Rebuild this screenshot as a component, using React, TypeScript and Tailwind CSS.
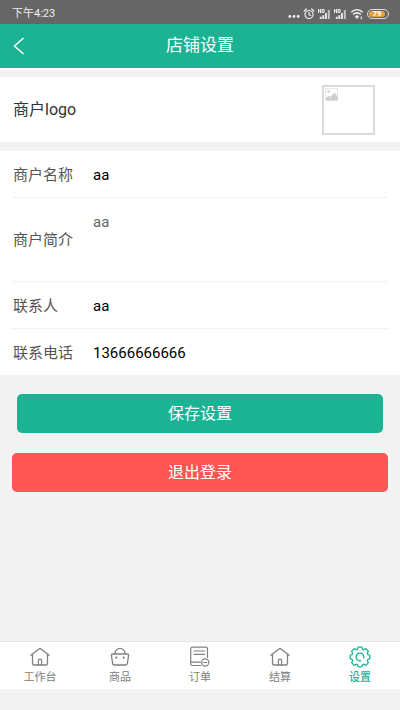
import { useState, type ReactNode } from 'react'
import clsx from 'clsx'

function StatusIcons() {
  return (
    <div className="flex items-center gap-[3px] text-[#eeeeee]">
      <svg width="12" height="12" viewBox="0 0 12 12" fill="currentColor">
        <circle cx="1.8" cy="8.5" r="1.4" />
        <circle cx="6" cy="8.5" r="1.4" />
        <circle cx="10.2" cy="8.5" r="1.4" />
      </svg>
      <svg width="12" height="12" viewBox="0 0 11 12" fill="none" stroke="currentColor" strokeWidth="1.2">
        <circle cx="5.5" cy="6.5" r="4" />
        <path d="M5.5 4.3v2.4l1.7.8M.7 3 2.8 1M10.3 3 8.2 1" strokeLinecap="round" />
      </svg>
      <SignalIcon />
      <SignalIcon />
      <svg width="14" height="12" viewBox="0 0 13 12" fill="none" stroke="currentColor" strokeWidth="1.6">
        <path d="M.8 4.2a8 8 0 0 1 11.4 0M2.7 6.5a5.3 5.3 0 0 1 7.6 0" />
        <path d="M4.3 8.5a3 3 0 0 1 4.4 0L6.5 11z" fill="currentColor" stroke="none" />
        <path d="M10.8 8.6v2.6" strokeWidth="1.2" />
      </svg>
      <div className="flex h-[10px] w-[22px] items-center rounded-full border border-[#dddddd] p-px">
        <span className="flex h-full w-4 items-center justify-center rounded-full bg-[#e8a33a] text-[8px] leading-none font-bold text-white">
          79
        </span>
      </div>
    </div>
  )
}

function SignalIcon() {
  return (
    <svg width="13" height="12" viewBox="0 0 13 12" fill="currentColor">
      <path d="M0 1h1v1.2h1V1h1v4H2V3.3H1V5H0zM3.6 1h1.6c1 0 1.6.8 1.6 2s-.6 2-1.6 2H3.6zm1 1v2c.8 0 1.1-.3 1.1-1s-.3-1-1.1-1z" />
      <path d="M1.8 8.7h1.8V11H1.8zM4.4 7.2h1.8V11H4.4zM7 5h1.8v6H7z" />
      <path d="M9.8 2h2v9h-2z" opacity=".7" />
    </svg>
  )
}

function HomeIcon() {
  return (
    <svg width="22" height="22" viewBox="0 0 22 22" fill="none" stroke="currentColor" strokeWidth="1.3" strokeLinecap="round" strokeLinejoin="round">
      <path d="M1.8 9.2 10 2.9q1-.8 2 0l8.2 6.3M3.5 8.2v9.4q0 1.4 1.4 1.4h12.2q1.4 0 1.4-1.4V8.2" />
      <path d="M9.4 19v-4.2q0-1.6 1.6-1.6t1.6 1.6V19" />
    </svg>
  )
}

function BagIcon() {
  return (
    <svg width="22" height="22" viewBox="0 0 22 22" fill="none" stroke="currentColor" strokeWidth="1.3" strokeLinejoin="round">
      <path d="M3.3 8h15.4q1 0 .9 1l-1.2 8.4q-.2 1.6-1.8 1.6H5.4q-1.6 0-1.8-1.6L2.4 9q-.1-1 .9-1z" />
      <path d="M6 7.8C6 4.7 8.2 2.3 11 2.3s5 2.4 5 5.5" />
      <circle cx="7.3" cy="11.7" r="1.1" fill="currentColor" stroke="none" />
      <circle cx="14.7" cy="11.7" r="1.1" fill="currentColor" stroke="none" />
    </svg>
  )
}

function OrderIcon() {
  return (
    <svg width="22" height="22" viewBox="0 0 22 22" fill="none" stroke="currentColor" strokeWidth="1.2" strokeLinecap="round">
      <path d="M18.5 11.5V3q0-1.8-1.8-1.8H3.5q-1.8 0-1.8 1.8v14.7q0 1.8 1.8 1.8h8.3" />
      <path d="M5 5h10.5M5 8.4h10.5M2 16.2h9.3" />
      <circle cx="16.2" cy="16.5" r="3.6" />
      <path d="M14.6 16.5h3.2" />
    </svg>
  )
}

function GearIcon() {
  return (
    <svg width="22" height="22" viewBox="0 0 22 22" fill="none" stroke="currentColor" strokeWidth="1.3" strokeLinecap="round" strokeLinejoin="round">
      <path d="M8.7 3.1 8.8 2q.1-.9 1-.9h2.4q.9 0 1 .9l.1 1.1 1.6.7.9-.8q.7-.6 1.3 0L19 4.9q.6.6 0 1.3l-.8.9.7 1.6 1.1.1q.9.1.9 1v2.4q0 .9-.9 1l-1.1.1-.7 1.6.8.9q.6.7 0 1.3L17.1 19q-.6.6-1.3 0l-.9-.8-1.6.7-.1 1.1q-.1.9-1 .9H9.8q-.9 0-1-.9l-.1-1.1-1.6-.7-.9.8q-.7.6-1.3 0L3 17.1q-.6-.6 0-1.3l.8-.9-.7-1.6L2 13.200q-.9-.1-.9-1V9.800q0-.9.9-1l1.100-.1.7-1.600-.8-.9q-.6-.7 0-1.300L4.900 3q.6-.6 1.300 0l.9.8z" />
      <path d="M11.8 14.8a3.9 3.9 0 1 1 3-3" />
    </svg>
  )
}

function BrokenImage() {
  return (
    <div className="h-[50px] w-[53px] border-2 border-[#dadada] p-px">
      <svg width="13" height="13" viewBox="0 0 13 13" fill="#cfcfcf" role="img" aria-label="商户logo">
        <path d="M.5.5h12v12H.5z" fill="none" stroke="#e8e8e8" />
        <circle cx="3.5" cy="3.5" r="1.3" />
        <path d="M1 12.5V10l2.5-2.2L5.5 9l3.7-4.3L12.5 8v4.5z" />
      </svg>
    </div>
  )
}

interface FieldProps {
  id: string
  label: string
  children: ReactNode
}

function Field({ id, label, children }: FieldProps) {
  return (
    <div className="mx-3 flex items-center border-b border-[#f1f1f1] last:border-b-0">
      <label htmlFor={id} className="w-20 shrink-0 pt-0.5 pl-px text-[15px] text-[#555555]">
        {label}
      </label>
      {children}
    </div>
  )
}

const inputClass = 'h-[46px] min-w-0 flex-1 bg-transparent pt-0.5 pl-px text-[15px] text-black outline-none'

const tabs = [
  { label: '工作台', icon: <HomeIcon /> },
  { label: '商品', icon: <BagIcon /> },
  { label: '订单', icon: <OrderIcon /> },
  { label: '结算', icon: <HomeIcon /> },
  { label: '设置', icon: <GearIcon />, active: true },
]

export default function App() {
  const [form, setForm] = useState({
    name: 'aa',
    intro: 'aa',
    contact: 'aa',
    phone: '13666666666',
  })

  return (
    <div className="flex min-h-screen flex-col bg-[#f2f2f2] font-[Roboto,'Noto_Sans_CJK_SC',sans-serif]">
      <div className="flex h-6 items-center justify-between bg-[#666666] pt-1 pr-[11px] pl-3 text-[11px] text-[#eeeeee]">
        <span>下午4:23</span>
        <StatusIcons />
      </div>

      <header className="grid h-[46px] grid-cols-[40px_1fr_40px] items-center border-b-2 border-white bg-[#1bb394] text-white">
        <button type="button" aria-label="返回" className="pl-3">
          <svg width="14" height="18" viewBox="0 0 14 18" fill="none" stroke="currentColor" strokeWidth="1.5">
            <path d="M11.5 1 2.5 9l9 8" />
          </svg>
        </button>
        <h1 className="text-center text-[17px]">店铺设置</h1>
      </header>

      <main className="flex-1">
        <section className="mt-[7px] flex h-[65px] items-center justify-between bg-white pr-[25px] pl-[13px]">
          <span className="text-[16px] text-[#333333]">商户logo</span>
          <BrokenImage />
        </section>

        <form onSubmit={(e) => e.preventDefault()}>
          <div className="mt-[9px] bg-white">
            <Field id="name" label="商户名称">
              <input
                id="name"
                className={inputClass}
                value={form.name}
                onChange={(e) => setForm({ ...form, name: e.target.value })}
              />
            </Field>
            <Field id="intro" label="商户简介">
              <textarea
                id="intro"
                className="h-[83px] min-w-0 flex-1 resize-none pt-[13px] pl-px text-[15px] text-[#666666] outline-none"
                value={form.intro}
                onChange={(e) => setForm({ ...form, intro: e.target.value })}
              />
            </Field>
            <Field id="contact" label="联系人">
              <input
                id="contact"
                className={inputClass}
                value={form.contact}
                onChange={(e) => setForm({ ...form, contact: e.target.value })}
              />
            </Field>
            <Field id="phone" label="联系电话">
              <input
                id="phone"
                type="tel"
                className={inputClass}
                value={form.phone}
                onChange={(e) => setForm({ ...form, phone: e.target.value })}
              />
            </Field>
          </div>

          <div className="flex flex-col gap-5 px-3 pt-[19px]">
            <button type="submit" className="mx-[5px] h-[39px] rounded-[5px] bg-[#1bb394] text-[16px] text-white">
              保存设置
            </button>
            <button type="button" className="h-[39px] rounded-[5px] bg-[#ff5555] text-[16px] text-white">
              退出登录
            </button>
          </div>
        </form>
      </main>

      <nav className="mb-[21px] grid h-12 grid-cols-5 border-t border-[#e6e6e6] bg-white">
        {tabs.map((tab) => (
          <a
            key={tab.label}
            href="#"
            aria-current={tab.active ? 'page' : undefined}
            className={clsx(
              'flex flex-col items-center pt-1 text-[11px] leading-5',
              tab.active ? 'font-medium text-[#1bb394]' : 'text-[#808080]',
            )}
          >
            {tab.icon}
            {tab.label}
          </a>
        ))}
      </nav>
    </div>
  )
}
